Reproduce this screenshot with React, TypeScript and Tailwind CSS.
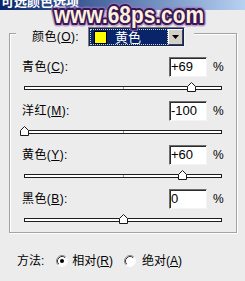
import React from "react";

const FONT = { fontFamily: '"Liberation Sans", "Noto Sans CJK SC", sans-serif' };

function Thumb({ center }: { center: number }) {
  return (
    <svg
      className="absolute"
      style={{ left: center - 4.5 - 25, top: -5 }}
      width={9}
      height={10}
      viewBox="0 0 9 10"
    >
      <polygon points="0.5,4.5 4.5,0.5 8.5,4.5 8.5,9.5 0.5,9.5" fill="#ffffff" stroke="#1a1a1a" strokeWidth={1} />
    </svg>
  );
}

function Slider({ value }: { value: number }) {
  const center = 123 + value * 0.99;
  return (
    <div className="h-[24px] pt-[9px]">
      <div className="relative ml-[14px] h-[4px] w-[198px] border border-[#1e1e1e] bg-white">
        <div className="absolute left-[98px] top-0 h-full w-px bg-[#9a9a9a]" />
        <Thumb center={center} />
      </div>
    </div>
  );
}

function Row({ label, letter, value, pct }: { label: string; letter: string; value: string; pct: number }) {
  return (
    <div>
      <div className="flex h-[20px] items-center pl-[12px]">
        <div className="w-[147px] text-[12px] tracking-[0.4px] text-black">
          {label}(<u>{letter}</u>):
        </div>
        <div className="flex h-[20px] w-[38px] items-center border-b border-l border-r border-t border-b-[#f4f4f4] border-l-[#6e6e6e] border-r-[#f4f4f4] border-t-[#6e6e6e] bg-white pl-[1px] shadow-[inset_1px_1px_0_#2a2a2a] text-[13px] text-black">
          {value}
        </div>
        <div className="ml-[6px] text-[12px] text-black">%</div>
      </div>
      <Slider value={pct} />
    </div>
  );
}

function Radio({ checked }: { checked: boolean }) {
  return (
    <svg width={12} height={12} viewBox="0 0 12 12">
      <circle cx={6} cy={6} r={5} fill="#ffffff" />
      <path d="M2.11 9.89 A5.5 5.5 0 0 1 9.89 2.11" fill="none" stroke="#8a8a8a" strokeWidth={1} />
      <path d="M2.82 9.18 A4.5 4.5 0 0 1 9.18 2.82" fill="none" stroke="#3a3a3a" strokeWidth={1} />
      <path d="M9.89 2.11 A5.5 5.5 0 0 1 2.11 9.89" fill="none" stroke="#ffffff" strokeWidth={1} />
      {checked && <circle cx={6} cy={6} r={2} fill="#000000" />}
    </svg>
  );
}

export default function App() {
  return (
    <div className="relative h-[281px] w-[245px] overflow-hidden bg-[#ececec]" style={FONT}>
      {/* Title bar */}
      <div className="h-[10px] overflow-hidden bg-gradient-to-r from-[#0a246a] to-[#b8d2f2]">
        <div className="-mt-[6px] pl-[1px] text-[13px] font-bold leading-[16px] text-white">可选颜色选项</div>
      </div>

      {/* Watermark */}
      <svg className="absolute left-[48px] top-[1px]" width={166} height={30} viewBox="0 0 166 30">
        <text
          x={6}
          y={22}
          textLength={150}
          lengthAdjust="spacingAndGlyphs"
          fontFamily='"Liberation Sans", sans-serif'
          fontWeight="bold"
          fontSize={23}
          fill="none"
          stroke="#9b74b8"
          strokeWidth={7}
          strokeLinejoin="round"
          opacity={0.6}
        >
          www.68ps.com
        </text>
        <text
          x={6}
          y={22}
          textLength={150}
          lengthAdjust="spacingAndGlyphs"
          fontFamily='"Liberation Sans", sans-serif'
          fontWeight="bold"
          fontSize={23}
          fill="#fbf1dc"
          stroke="#3a1656"
          strokeWidth={4}
          strokeLinejoin="round"
          style={{ paintOrder: "stroke fill" }}
        >
          www.68ps.com
        </text>
      </svg>

      {/* Group box */}
      <div className="ml-[9px] mt-[23px] h-[200px] w-[228px] border border-[#a3a3a3] shadow-[1px_1px_0_#ffffff,inset_1px_1px_0_#ffffff]">
        <div className="-mt-[7px] ml-[6px] flex h-[20px] w-[178px] items-center bg-[#ececec] pl-[16px]">
          <div className="w-[56px] text-[12px] tracking-[0.4px] text-black">
            颜色(<u>O</u>):
          </div>
          <div className="flex h-[20px] w-[97px] items-center border-b border-l border-r border-t border-b-[#f4f4f4] border-l-[#7a7a7a] border-r-[#f4f4f4] border-t-[#7a7a7a] bg-[#0a246a]">
            <div className="ml-[1px] flex h-[16px] w-[78px] items-center border border-dotted border-[#d8d8a0]">
              <div className="ml-[3px] h-[13px] w-[13px] border border-black bg-[#ffff00]" />
              <div className="ml-[8px] text-[13px] leading-none text-white">黄色</div>
            </div>
            <div className="ml-auto mr-[1px] flex h-[16px] w-[15px] items-center justify-center border-b border-l border-r border-t border-b-[#404040] border-l-[#ffffff] border-r-[#404040] border-t-[#ffffff] bg-[#d4d0c8]">
              <svg width={7} height={4} viewBox="0 0 7 4">
                <polygon points="0,0 7,0 3.5,4" fill="#000000" />
              </svg>
            </div>
          </div>
        </div>

        <div className="mt-[10px]">
          <Row label="青色" letter="C" value="+69" pct={69} />
          <Row label="洋红" letter="M" value="-100" pct={-100} />
          <Row label="黄色" letter="Y" value="+60" pct={60} />
          <Row label="黑色" letter="B" value="0" pct={0} />
        </div>
      </div>

      {/* Method row */}
      <div className="mt-[20px] flex h-[16px] items-center pl-[17px] text-[12px] text-black">
        <span>方法:</span>
        <span className="ml-[12px] flex items-center">
          <Radio checked={true} />
        </span>
        <span className="ml-[4px]">
          相对(<u>R</u>)
        </span>
        <span className="ml-[11px] flex items-center">
          <Radio checked={false} />
        </span>
        <span className="ml-[6px]">
          绝对(<u>A</u>)
        </span>
      </div>
    </div>
  );
}
